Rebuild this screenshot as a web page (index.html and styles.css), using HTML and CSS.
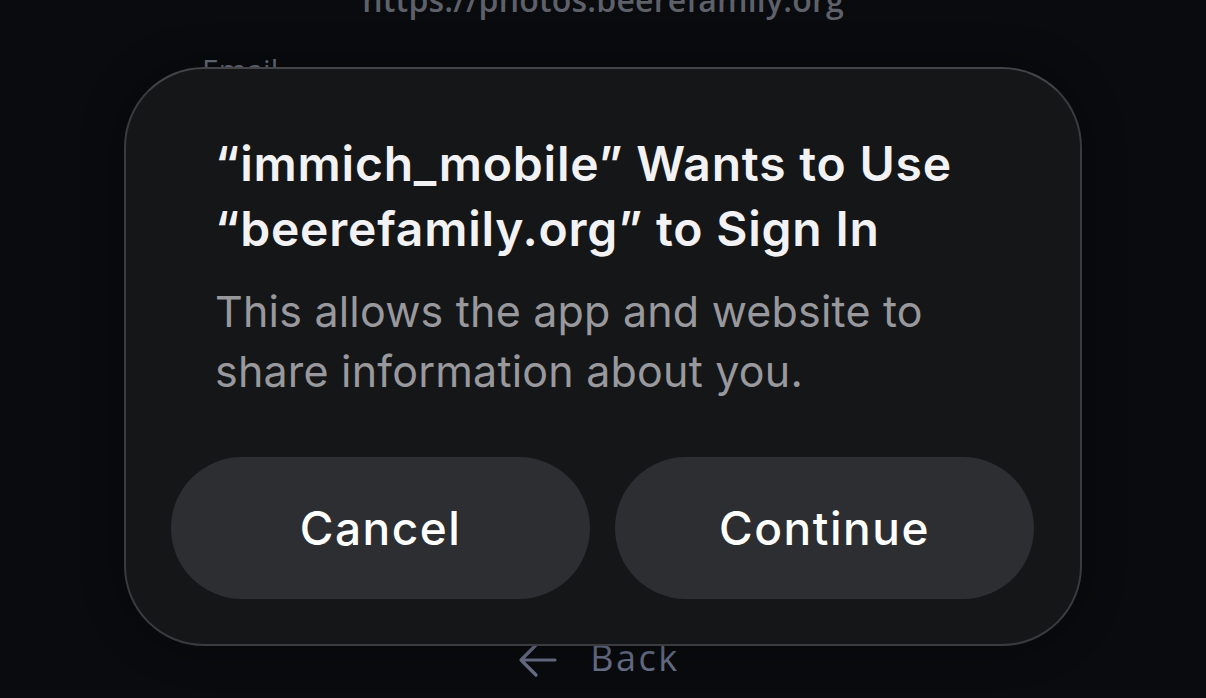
FILE: index.html
```html
<!DOCTYPE html>
<html lang="en">
<head>
<meta charset="utf-8">
<title>Sign In</title>
<link rel="stylesheet" href="styles.css">
</head>
<body>
<div class="page">
  <div class="url">https://photos.beerefamily.org</div>
  <form class="login">
    <label class="field-label">Email</label>
    <div class="spacer"></div>
    <div class="back">
      <svg class="back-arrow" width="40" height="36" viewBox="0 0 40 36" fill="none" stroke="currentColor" stroke-width="3.2" stroke-linecap="round" stroke-linejoin="round"><path d="M37 18H4M18 3L3 18l15 15"/></svg>
      <span>Back</span>
    </div>
  </form>
  <div class="glow"></div>
</div>
<div class="dialog" role="alertdialog">
  <h1 class="title">“immich_mobile” Wants to Use “beerefamily.org” to Sign In</h1>
  <p class="message">This allows the app and website to share information about you.</p>
  <div class="actions">
    <button class="btn">Cancel</button>
    <button class="btn">Continue</button>
  </div>
</div>
</body>
</html>
```
FILE: styles.css
```css
* { box-sizing: border-box; }
html, body {
  margin: 0;
  height: 100%;
  background: #0a0b0e;
  overflow: hidden;
  font-family: Inter, "Noto Sans", sans-serif;
}
.page {
  position: relative;
  height: 698px;
  display: flex;
  flex-direction: column;
  align-items: center;
}
.url {
  margin-top: -20px;
  font-family: "Open Sans", sans-serif;
  font-weight: 600;
  font-size: 32px;
  line-height: 40px;
  color: #5e6169;
  letter-spacing: 0.2px;
}
.login {
  width: 800px;
  display: flex;
  flex-direction: column;
}
.field-label {
  margin-top: 30px;
  margin-left: -1px;
  font-family: "Open Sans", sans-serif;
  font-size: 30px;
  line-height: 40px;
  color: #6c7281;
}
.spacer { height: 520px; }
.back {
  align-self: center;
  display: flex;
  align-items: center;
  gap: 32px;
  color: #69718a;
  font-family: "Open Sans", sans-serif;
  font-size: 36px;
  font-weight: 500;
  letter-spacing: 2.5px;
  margin-left: -8px;
  margin-top: 23px;
}
.back-arrow { display: block; margin-top: 4px; }
.glow {
  position: absolute;
  left: 940px;
  top: 300px;
  width: 90px;
  height: 90px;
  border-radius: 50%;
  background: radial-gradient(circle, rgba(255,255,255,0.05), rgba(255,255,255,0) 70%);
}
.dialog {
  position: absolute;
  left: 124px;
  top: 67px;
  width: 958px;
  height: 579px;
  border: 2px solid #3a3b3f;
  border-top-color: #434448;
  border-radius: 80px;
  background: #151618;
  padding: 62px 46px 45px 45px;
  display: flex;
  flex-direction: column;
  box-shadow: 0 0 40px rgba(0,0,0,0.4);
}
.title {
  margin: 0;
  padding: 0 20px 0 44px;
  font-size: 48px;
  line-height: 65px;
  font-weight: 600;
  color: #f2f2f4;
  letter-spacing: 0.8px;
}
.message {
  margin: 20px 0 0;
  padding: 0 60px 0 44px;
  font-size: 43px;
  line-height: 60px;
  font-weight: 400;
  color: #98989d;
  letter-spacing: 0.2px;
}
.actions {
  margin-top: auto;
  display: grid;
  grid-template-columns: 1fr 1fr;
  gap: 25px;
}
.btn {
  height: 142px;
  border: none;
  border-radius: 71px;
  background: #2d2e31;
  color: #ffffff;
  font-family: Inter, "Noto Sans", sans-serif;
  font-size: 46px;
  font-weight: 500;
  letter-spacing: 1.5px;
  padding: 0;
}
```
